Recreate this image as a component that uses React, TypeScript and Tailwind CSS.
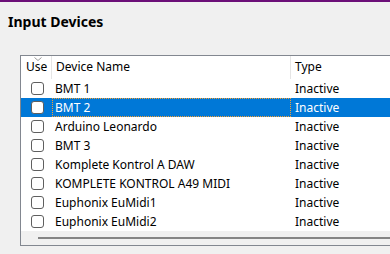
import React from 'react';

interface Device {
  name: string;
  type: string;
}

const devices: Device[] = [
  { name: 'BMT 1', type: 'Inactive' },
  { name: 'BMT 2', type: 'Inactive' },
  { name: 'Arduino Leonardo', type: 'Inactive' },
  { name: 'BMT 3', type: 'Inactive' },
  { name: 'Komplete Kontrol A DAW', type: 'Inactive' },
  { name: 'KOMPLETE KONTROL A49 MIDI', type: 'Inactive' },
  { name: 'Euphonix EuMidi1', type: 'Inactive' },
  { name: 'Euphonix EuMidi2', type: 'Inactive' },
];

const font = { fontFamily: '"Noto Sans", "Open Sans", sans-serif' };

export default function App() {
  const selected = 1;

  return (
    <div className="w-[390px] h-[254px] bg-[#f0f0f0] overflow-hidden" style={font}>
      <div className="h-[2px] bg-[#6b0f78]" />
      <h1 className="pl-[8px] pt-[10px] h-[53px] text-[14px] leading-[20px] font-bold text-black">
        Input Devices
      </h1>

      <div className="ml-[20px] w-[400px] h-[191px] border border-[#828790] flex flex-col">
        {/* header */}
        <div className="h-[23px] bg-white flex text-[12px] text-black shrink-0">
          <div className="relative w-[30px] flex items-end pb-[3px] pl-[5px]">
            <svg
              className="absolute left-[13px] top-[1px]"
              width="8"
              height="4"
              viewBox="0 0 8 4"
              fill="none"
              stroke="#9a9a9a"
              strokeWidth="1"
            >
              <path d="M0.5 0.5 L4 3.5 L7.5 0.5" />
            </svg>
            Use
          </div>
          <div className="w-px bg-[#e5e5e5]" />
          <div className="w-[238px] flex items-end pb-[3px] pl-[4px]">Device Name</div>
          <div className="w-px bg-[#e5e5e5]" />
          <div className="flex-1 flex items-end pb-[3px] pl-[4px]">Type</div>
        </div>

        {/* rows */}
        <div className="bg-white flex flex-col shrink-0">
          {devices.map((d, i) => {
            const sel = i === selected;
            return (
              <div
                key={d.name}
                className={`h-[19px] flex text-[12px] leading-[19px] ${
                  sel ? 'bg-[#0078d7] text-white' : 'text-black'
                }`}
              >
                <div className="w-[31px] flex items-center pl-[10px]">
                  <div className="w-[13px] h-[13px] rounded-[3px] border border-[#5f5f5f] bg-white" />
                </div>
                <div
                  className={`w-[239px] ${
                    sel ? 'pl-[2px] border border-dotted border-[#f5a033] leading-[17px]' : 'pl-[3px]'
                  }`}
                >
                  {d.name}
                </div>
                <div className="flex-1 pl-[4px]">{d.type}</div>
              </div>
            );
          })}
        </div>

        {/* horizontal scrollbar */}
        <div className="flex-1 bg-[#f0f0f0] pl-[17px] pt-[6px]">
          <div className="h-[2px] bg-[#858585]" />
        </div>
      </div>
    </div>
  );
}
